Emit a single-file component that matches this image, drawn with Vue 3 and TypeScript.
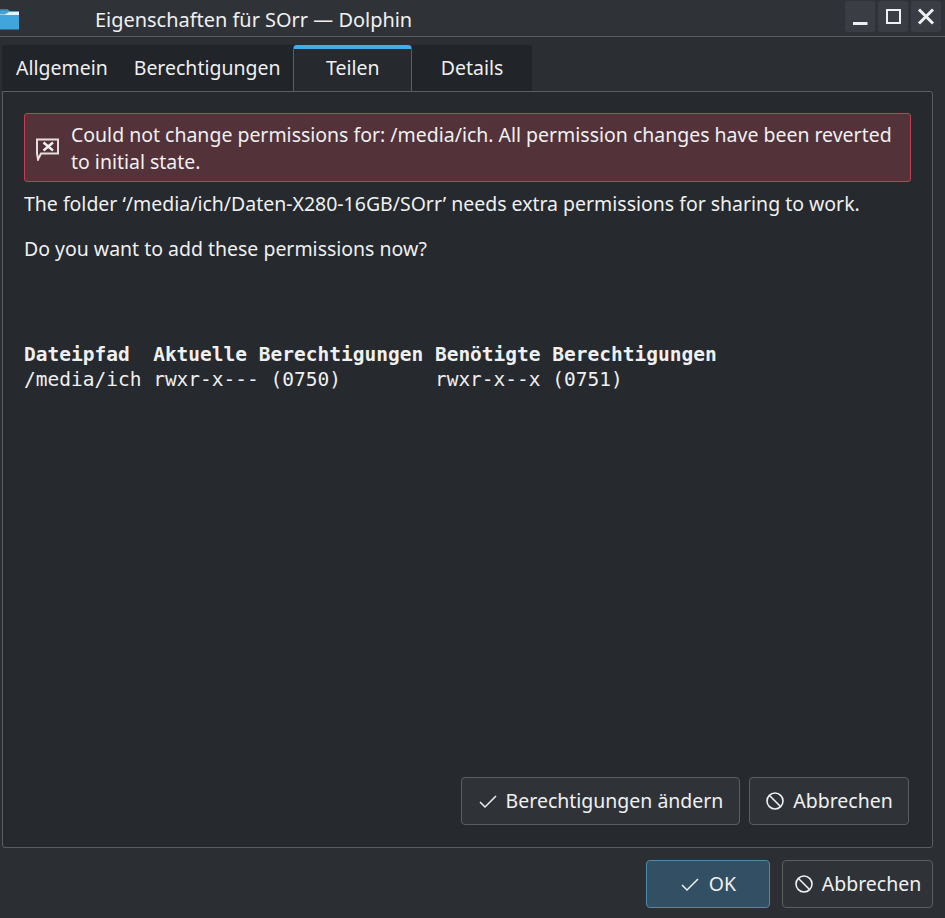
<script setup lang="ts">
const tabs = [
  { label: 'Allgemein', width: 120 },
  { label: 'Berechtigungen', width: 171 },
  { label: 'Teilen', width: 119, active: true },
  { label: 'Details', width: 120 },
];

const windowButtons = ['min', 'max', 'close'];
</script>

<template>
  <div class="window">
    <header class="titlebar">
      <svg class="titlebar__icon" width="20" height="27" viewBox="0 0 20 27" aria-hidden="true">
        <path d="M-6 5 H7 L10 7 H19 V25.5 H-6 Z" fill="#3fa5dc" />
        <path d="M-6 10.5 L5 10.5 L9 8 H19 V11 H-6 Z" fill="#e4f4fc" />
        <path d="M-6 5 H7 L9 6.5 H-6 Z" fill="#2b7fb5" />
      </svg>
      <span class="titlebar__title">Eigenschaften für SOrr — Dolphin</span>
      <div class="titlebar__buttons">
        <button v-for="b in windowButtons" :key="b" type="button" class="winbtn">
          <svg width="20" height="20" viewBox="0 0 20 20" aria-hidden="true">
            <path v-if="b === 'min'" d="M3 16.5 H17.5" stroke="#eff0f1" stroke-width="3" />
            <rect v-else-if="b === 'max'" x="4" y="3" width="13" height="13" fill="none" stroke="#eff0f1" stroke-width="2" />
            <path v-else d="M3 2.5 L17 16.5 M17 2.5 L3 16.5" stroke="#eff0f1" stroke-width="3" />
          </svg>
        </button>
      </div>
    </header>

    <div class="content">
      <nav class="tabs">
        <button
          v-for="t in tabs"
          :key="t.label"
          type="button"
          class="tab"
          :class="{ 'tab--active': t.active }"
          :style="{ width: t.width + 'px' }"
        >
          {{ t.label }}
        </button>
      </nav>

      <section class="panel">
        <div class="message">
          <svg class="message__icon" width="26" height="26" viewBox="0 0 26 26" aria-hidden="true">
            <path d="M2 4.5 H23 V18.5 H6 L3 24.5 L2 18.5 Z" fill="none" stroke="#e6dfe1" stroke-width="2" />
            <path d="M8.5 7.5 L18 15.5 M18 7.5 L8.5 15.5" stroke="#eff0f1" stroke-width="2.4" />
          </svg>
          <p class="message__text">Could not change permissions for: /media/ich. All permission changes have been reverted to initial state.</p>
        </div>

        <p class="line">The folder ‘/media/ich/Daten-X280-16GB/SOrr’ needs extra permissions for sharing to work.</p>
        <p class="line line--question">Do you want to add these permissions now?</p>

        <pre class="perm"><b>Dateipfad  Aktuelle Berechtigungen Benötigte Berechtigungen</b>
/media/ich rwxr-x--- (0750)        rwxr-x--x (0751)</pre>

        <div class="panel__actions">
          <button type="button" class="btn btn--change">
            <svg width="20" height="20" viewBox="0 0 20 20" aria-hidden="true">
              <path d="M2 11 L7 16 L18 5" fill="none" stroke="#eff0f1" stroke-width="1.5" />
            </svg>
            Berechtigungen ändern
          </button>
          <button type="button" class="btn btn--cancel">
            <svg width="20" height="20" viewBox="0 0 20 20" aria-hidden="true">
              <circle cx="10" cy="10" r="8" fill="none" stroke="#eff0f1" stroke-width="1.6" />
              <path d="M4.5 4.5 L15.5 15.5" stroke="#eff0f1" stroke-width="1.6" />
            </svg>
            Abbrechen
          </button>
        </div>
      </section>

      <footer class="dialog-actions">
        <button type="button" class="btn btn--ok">
          <svg width="20" height="20" viewBox="0 0 20 20" aria-hidden="true">
            <path d="M2 11 L7 16 L18 5" fill="none" stroke="#eff0f1" stroke-width="1.5" />
          </svg>
          OK
        </button>
        <button type="button" class="btn btn--dialog-cancel">
          <svg width="20" height="20" viewBox="0 0 20 20" aria-hidden="true">
            <circle cx="10" cy="10" r="8" fill="none" stroke="#eff0f1" stroke-width="1.6" />
            <path d="M4.5 4.5 L15.5 15.5" stroke="#eff0f1" stroke-width="1.6" />
          </svg>
          Abbrechen
        </button>
      </footer>
    </div>
  </div>
</template>

<style>
html,
body {
  margin: 0;
  background: #2b2f34;
}
</style>

<style scoped>
.window {
  width: 945px;
  height: 918px;
  overflow: hidden;
  background: #2b2f34;
  color: #eff0f1;
  font-family: "Noto Sans", sans-serif;
  font-size: 19.48px;
}

.titlebar {
  display: flex;
  align-items: center;
  box-sizing: border-box;
  height: 37px;
  border-bottom: 1px solid #5a5d61;
  background: #2f3338;
}

.titlebar__icon {
  flex-shrink: 0;
  margin-top: -2px;
}

.titlebar__title {
  margin-left: 75px;
  padding-top: 3px;
  font-size: 19.95px;
  line-height: 36px;
}

.titlebar__buttons {
  display: flex;
  gap: 3px;
  margin-left: auto;
  margin-right: 4px;
  margin-top: -3px;
}

.winbtn {
  display: flex;
  align-items: center;
  justify-content: center;
  width: 30px;
  height: 31px;
  padding: 0;
  border: 0;
  border-radius: 3px;
  background: #3a3e44;
}

.content {
  padding: 8px 12px 0 2px;
}

.tabs {
  display: flex;
  width: 530px;
  height: 46px;
  background: #212429;
  border-radius: 3px 3px 0 0;
}

.tab {
  box-sizing: border-box;
  height: 46px;
  padding: 0 0 2px;
  border: 0;
  background: transparent;
  color: #eff0f1;
  font: inherit;
}

.tab--active {
  position: relative;
  z-index: 1;
  height: 46px;
  margin-left: 1px;
  padding-bottom: 5px;
  border: 1px solid #5a5d61;
  border-top: 4px solid #3daee9;
  border-bottom: 0;
  border-radius: 4px 4px 0 0;
  background: #26292e;
}

.panel {
  box-sizing: border-box;
  display: flex;
  flex-direction: column;
  height: 757px;
  padding: 21px 21px 22px 21px;
  border: 1px solid #5a5d61;
  border-radius: 0 3px 3px 3px;
  background: #26292e;
}

.message {
  display: flex;
  align-items: center;
  box-sizing: border-box;
  width: 887px;
  height: 69px;
  padding: 0 12px 0 10px;
  border: 1px solid #c0404f;
  border-radius: 3px;
  background: #53323a;
}

.message__icon {
  flex-shrink: 0;
  margin-right: 10px;
}

.message__text {
  margin: 0;
  line-height: 27px;
}

.line {
  margin: 8px 0 0;
  line-height: 27px;
}

.line--question {
  margin-top: 18px;
}

.perm {
  margin: 80px 0 0;
  font-family: "DejaVu Sans Mono", monospace;
  font-size: 19.5px;
  line-height: 25px;
}

.panel__actions {
  display: flex;
  justify-content: flex-end;
  gap: 9px;
  margin-top: auto;
  padding-right: 2px;
}

.btn {
  display: inline-flex;
  align-items: center;
  justify-content: center;
  gap: 8px;
  box-sizing: border-box;
  height: 48px;
  padding: 0 0 2px;
  border: 1px solid #5a5d61;
  border-radius: 4px;
  background: #2f3338;
  color: #eff0f1;
  font: inherit;
}

.btn svg {
  margin-top: 2px;
}

.btn--change {
  width: 279px;
}

.btn--cancel {
  width: 160px;
}

.dialog-actions {
  display: flex;
  justify-content: flex-end;
  gap: 12px;
  margin-top: 12px;
}

.btn--ok {
  gap: 9px;
  width: 124px;
  border-color: #4f89a8;
  background: #334f63;
}

.btn--dialog-cancel {
  width: 151px;
}
</style>
